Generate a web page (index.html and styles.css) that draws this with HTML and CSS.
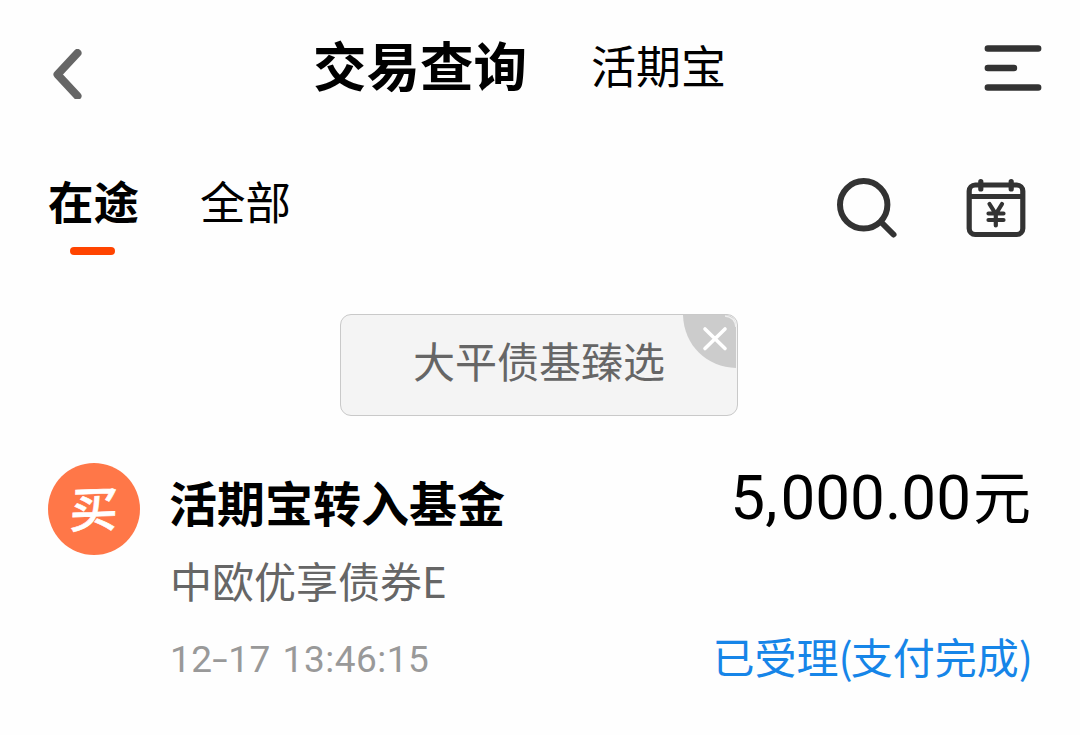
FILE: index.html
```html
<!DOCTYPE html>
<html lang="zh-CN">
<head>
<meta charset="utf-8">
<title>交易查询</title>
<link rel="stylesheet" href="styles.css">
</head>
<body>
<header class="topbar">
  <svg class="back" viewBox="0 0 32 50" width="32" height="50"><path d="M27.500 4L7.500 25.500L27.500 47" fill="none" stroke="#666" stroke-width="8" stroke-linecap="round" stroke-linejoin="round"/></svg>
  <nav class="titles"><h1 class="title">交易查询</h1><span class="subtitle">活期宝</span></nav>
  <svg class="menu" viewBox="0 0 60 48" width="60" height="48"><path d="M4.800 4.500H55.200M4.800 24H31M4.800 43.500H55.200" fill="none" stroke="#333" stroke-width="6.400" stroke-linecap="round"/></svg>
</header>
<section class="filters">
  <div class="tab active">在途</div>
  <div class="tab">全部</div>
  <svg class="search" viewBox="0 0 62 62" width="62" height="62"><g fill="none" stroke="#333"><circle cx="27.700" cy="27.800" r="23.700" stroke-width="6"/><path d="M46 46L57.500 57.500" stroke-width="6" stroke-linecap="round"/></g></svg>
  <svg class="calendar" viewBox="0 0 60 60" width="60" height="60"><g fill="none" stroke="#333" stroke-width="5.200"><rect x="3.200" y="7" width="53.600" height="49.500" rx="6"/><path d="M3 18.500H57"/><path d="M14.800 3.500V11M45.200 3.500V11" stroke-linecap="round"/><path d="M23.500 26L29.800 36L36 26M29.800 36V47.500M22.500 35.500H37.500M22.500 42H37.500" stroke-width="4.200" stroke-linecap="round"/></g></svg>
</section>
<div class="promo">
  <span>大平债基臻选</span>
  <svg class="close" viewBox="0 0 55 54" width="55" height="54"><path d="M1 0H43Q54 0 54 12V53C25 52 2 31 1 0Z" fill="#ccc"/><path d="M43 1Q53 2 54 12" fill="none" stroke="#eee" stroke-width="1.500"/><path d="M23 14L43 33.500M43 14L23 33.500" stroke="#fff" stroke-width="3.600" stroke-linecap="round"/></svg>
</div>
<main class="record">
  <div class="badge"><span>买</span></div>
  <div class="info">
    <div class="name">活期宝转入基金</div>
    <div class="fund">中欧优享债券E</div>
    <div class="time">12<span class="dash">-</span>17 13:46:15</div>
  </div>
  <div class="result">
    <div class="amount">5<span class="comma">,</span>000.00<span class="unit">元</span></div>
    <div class="status">已受理<span class="paren">(</span>支付完成)</div>
  </div>
</main>
</body>
</html>
```
FILE: styles.css
```css
* { box-sizing: border-box; }
body {
  margin: 0;
  width: 1080px;
  height: 735px;
  overflow: hidden;
  background: #fefefe;
  color: #000;
  font-family: "Noto Sans CJK SC", sans-serif;
}
svg { display: block; flex: none; }
.topbar {
  display: flex;
  height: 140px;
  padding: 0 37px 0 50px;
}
.back { margin-top: 49px; }
.titles { display: flex; flex: 1; margin-left: 231px; white-space: nowrap; }
.title { margin: 0; font-size: 53.500px; line-height: 80px; font-weight: 700; padding-top: 24px; }
.subtitle { font-size: 45px; line-height: 60px; margin-left: 64px; padding-top: 35px; }
.menu { margin-top: 44px; }
.filters {
  display: flex;
  height: 174px;
  padding: 30px 54px 0 48px;
}
.tab { font-size: 45.500px; line-height: 60px; margin-right: 61px; }
.active { font-weight: 700; }
.active::after {
  content: "";
  display: block;
  width: 45px;
  height: 8px;
  margin: 17px 0 0 22px;
  border-radius: 4px;
  background: #ff4400;
}
.search { margin-left: auto; margin-top: 7px; }
.calendar { margin: 8px 0 0 68px; }
.promo {
  position: relative;
  width: 398px;
  height: 102px;
  margin-left: 340px;
  border: 1.500px solid #c9c9c9;
  border-radius: 11px;
  background: #f4f4f4;
  color: #666;
  font-size: 42px;
  line-height: 90px;
  text-align: center;
  overflow: hidden;
}
.close { position: absolute; top: 0; right: 0; }
.record { display: flex; padding: 47px 49px 0 48px; }
.badge {
  display: flex;
  align-items: center;
  justify-content: center;
  width: 92px;
  height: 92px;
  border-radius: 50%;
  background: #ff7748;
  color: #fff;
  font-size: 48px;
  font-weight: 500;
  line-height: 60px;
}
.badge span { transform: translateY(-3px) rotate(-2deg) skewX(-4deg); -webkit-text-stroke: 0.600px #fff; }
.info { margin-left: 29px; white-space: nowrap; }
.name { font-size: 48px; font-weight: 700; line-height: 60px; padding-top: 8px; }
.fund { font-size: 42px; line-height: 60px; margin-top: 19px; padding-left: 1px; color: #666; }
.time {
  font-family: Roboto, sans-serif;
  font-size: 37px;
  line-height: 50px;
  margin-top: 25px;
  padding-left: 1px;
  color: #999;
  letter-spacing: 0.500px;
  word-spacing: 2px;
}
.dash { display: inline-block; transform: scaleX(1.500); margin: 0 2.500px; }
.result { margin-left: auto; text-align: right; white-space: nowrap; }
.amount {
  font-family: Roboto, "Noto Sans CJK SC", sans-serif;
  font-size: 62px;
  line-height: 80px;
  margin: -5px 0 0;
}
.comma { letter-spacing: 3px; }
.unit { font-size: 58px; margin-left: 2px; }
.status { font-size: 42px; line-height: 60px; margin: 87px -2px 0 0; color: #1685e8; }
.paren { letter-spacing: -2px; }
```
